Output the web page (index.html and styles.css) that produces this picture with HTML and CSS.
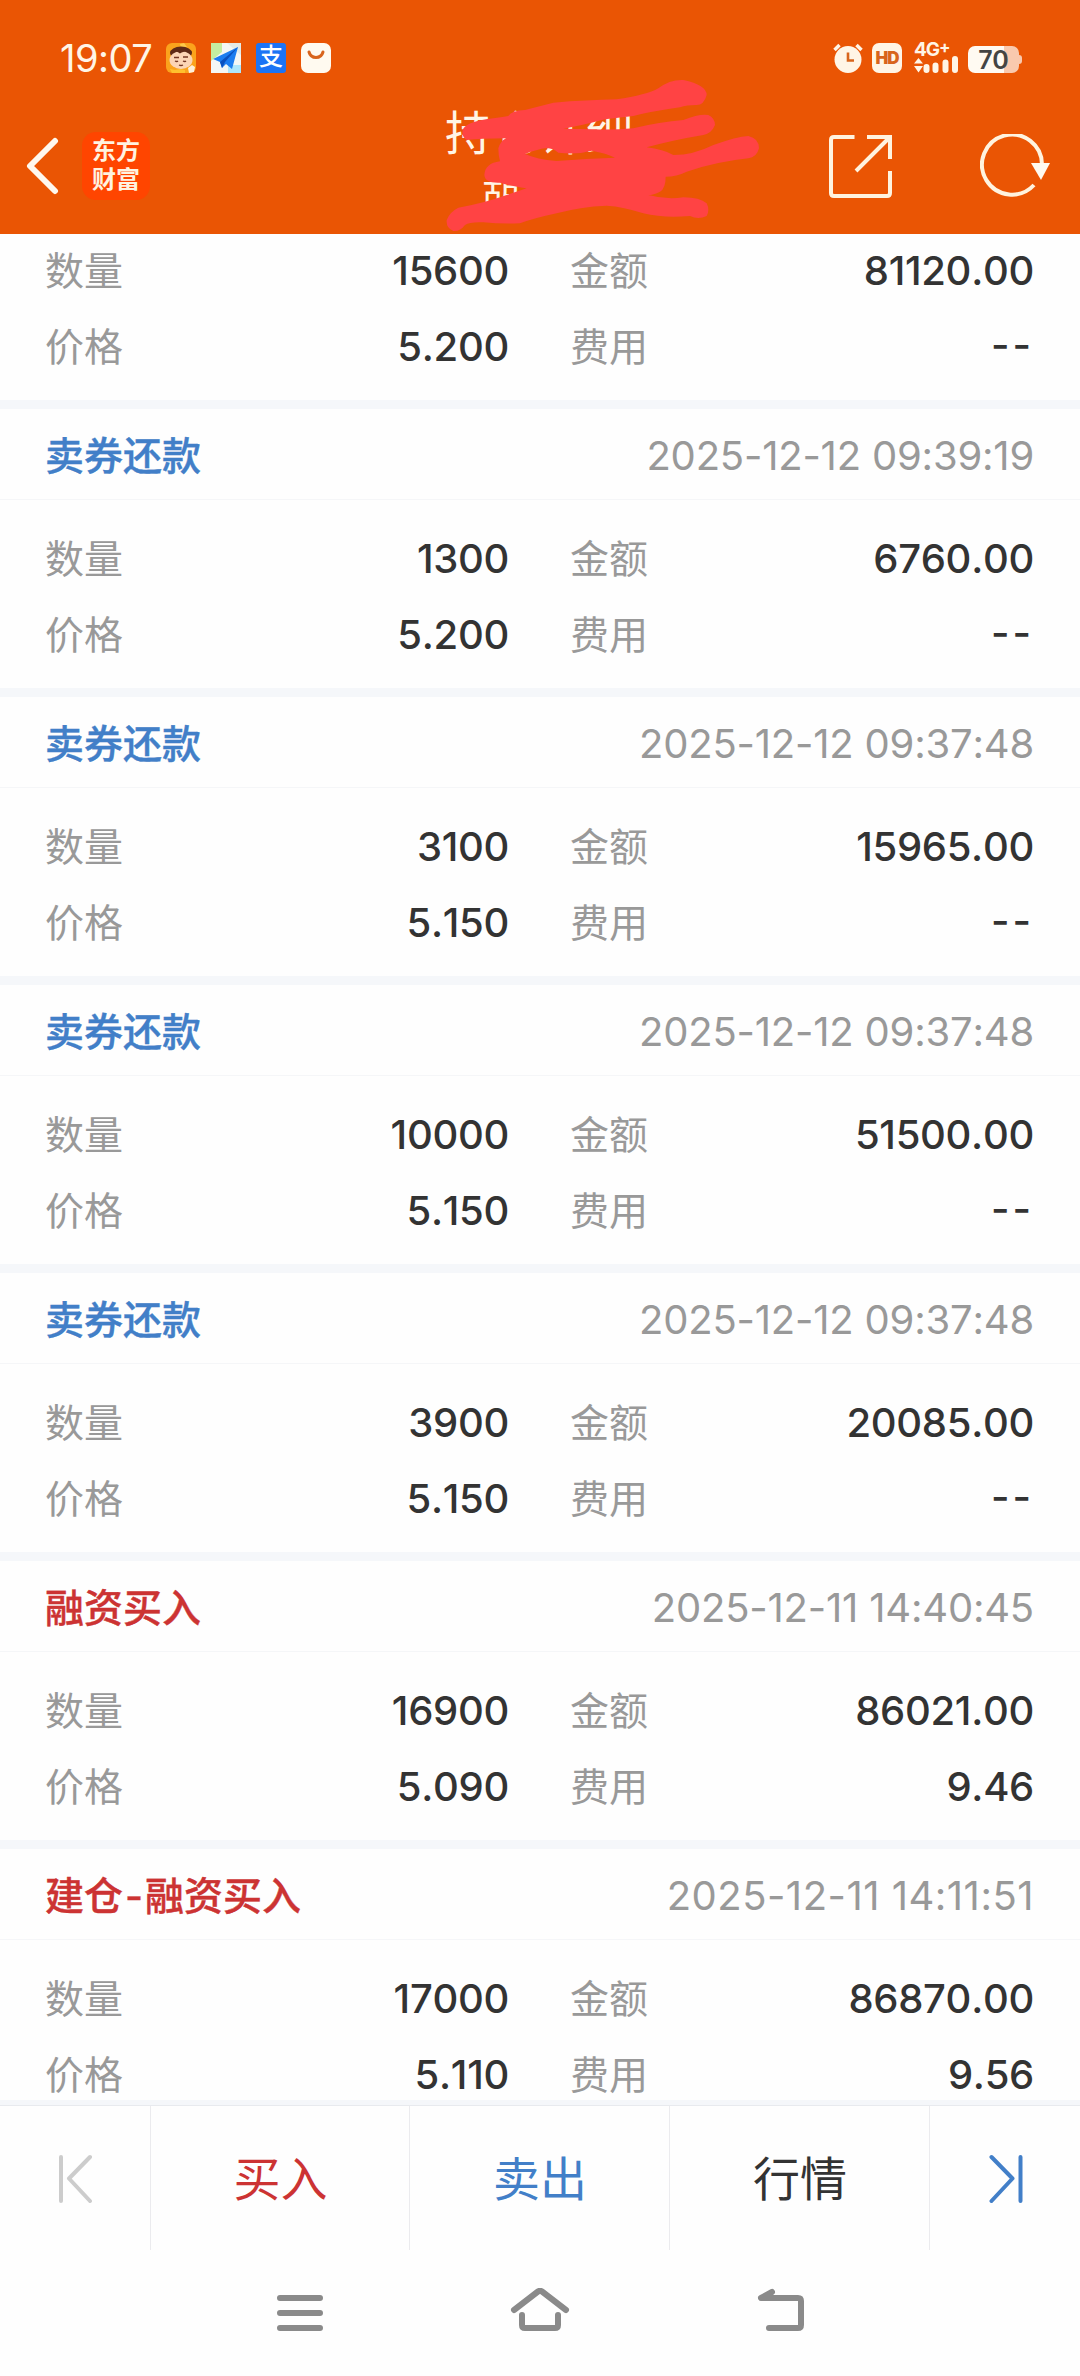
FILE: index.html
```html
<!DOCTYPE html>
<html lang="zh-CN">
<head>
    <meta charset="utf-8">
    <title>持仓详细</title>
    <meta name="viewport" content="width=device-width, initial-scale=1">
    <link rel="stylesheet" href="styles.css">
</head>
<body>
    <div class="header">
        <div class="status-bar">
            <span class="time">19:07</span>
            <div class="status-apps">
                <svg width="30" height="30" viewBox="0 0 30 30">
                    <rect width="30" height="30" rx="6" fill="#fba31c"/>
                    <path d="M14 1l4-1 3 4-6 1z" fill="#ffc94a"/>
                    <ellipse cx="15" cy="10" rx="11" ry="6.500" fill="#5f2a16"/>
                    <ellipse cx="15" cy="17" rx="11.500" ry="9" fill="#fcd5b5"/>
                    <path d="M6 9q4-3 8 0l2-1q5-2 9 2" stroke="#5f2a16" stroke-width="2.500" fill="none"/>
                    <path d="M8 14.500h5M17 14h5M9 18q2 1 3 0M17 18q2 1 3 0M13 22q2 1 4 0" stroke="#743722" stroke-width="1.300" fill="none"/>
                    <path d="M4 26l5 1 5-1 5 1v3H6z" fill="#ffc02e"/>
                    <path d="M22 25l4-3 3 2-1 5-5 1z" fill="#fff0dc"/>
                </svg>
                <svg width="30" height="30" viewBox="0 0 30 30">
                    <rect width="30" height="30" fill="#f4f7f5"/>
                    <path d="M0 0h11v9L0 18z" fill="#c5eda0"/>
                    <path d="M16 0h14v12z" fill="#e4ebe8"/>
                    <path d="M17 22h13v8H17z" fill="#aee6fb"/>
                    <path d="M27 4L2 16l7 3 2 6 4-4 6 5z" fill="#1c7df0"/>
                    <path d="M27 4L9 19l2 6 3-6z" fill="#0b50bd"/>
                </svg>
                <span class="alipay">支</span>
                <svg width="30" height="30" viewBox="0 0 30 30">
                    <rect width="30" height="30" rx="7" fill="#fffaf0"/>
                    <path d="M8 9q1.500 5.500 7 5.500T22 9" stroke="#d8641c" stroke-width="3" stroke-linecap="round" fill="none"/>
                </svg>
            </div>
            <div class="status-right">
                <svg width="30" height="30" viewBox="0 0 30 30">
                    <path d="M1.500 7l5-5M23.500 2l5 5" stroke="#fff5e6" stroke-width="3.500"/>
                    <circle cx="15" cy="16.500" r="13.500" fill="#fff5e6"/>
                    <path d="M15 9.500v8h6" stroke="#d8641c" stroke-width="2.600" fill="none"/>
                </svg>
                <span class="hd">HD</span>
                <div class="signal">
                    <span class="network">4G<sup>+</sup></span>
                    <svg width="45" height="17" viewBox="0 0 45 17">
                        <path d="M4.500 2l4.500 5.500H0zM4.500 16.500L0 10h9z" fill="#fff5e6"/>
                        <path d="M12.500 11v3M21.500 9.500v4.500M31.500 6.500v7.500M41 3v11" stroke="#fff5e6" stroke-width="6" stroke-linecap="round"/>
                    </svg>
                </div>
                <div class="battery"><span>70</span></div>
            </div>
        </div>
        <div class="nav-bar">
            <svg class="back" width="34" height="58" viewBox="0 0 34 58">
                <path d="M30 4L5 29l25 25" stroke="#fff8ee" stroke-width="6" stroke-linecap="round" stroke-linejoin="round" fill="none"/>
            </svg>
            <div class="logo">东方<br>财富</div>
            <div class="title">
                <div class="title-main">持仓详细</div>
                <div class="title-sub">胡</div>
            </div>
            <svg class="share" width="63" height="63" viewBox="0 0 63 63">
                <path d="M25.500 2H5Q2 2 2 5v53q0 3 3 3h53q3 0 3-3V36M38 2h23v22M61 2L27 36" stroke="#fff3df" stroke-width="4" fill="none"/>
            </svg>
            <svg class="refresh" width="72" height="64" viewBox="0 0 72 64">
                <path d="M62 31A30 30 0 1 0 54 51" stroke="#fff3df" stroke-width="4" fill="none"/>
                <path d="M51 29h19L61 46z" fill="#fffaf0"/>
            </svg>
        </div>
        <!-- marker strokes over the title -->
        <svg class="scribble" width="380" height="180" viewBox="0 0 1140 540">
            <path fill="#ff4344" fill-rule="evenodd" d="M188 210Q195 188 262 177Q300 172 325 168Q335 152 375 150L460 128Q560 120 650 118Q740 105 775 85Q810 58 850 60Q920 75 920 105Q912 135 890 135Q860 135 840 142Q750 155 700 168L615 178Q540 198 490 206L580 208Q640 210 700 205Q780 185 850 180Q900 160 925 165Q945 175 945 195Q935 220 910 225Q820 240 740 262Q790 268 820 285Q880 285 940 255Q1010 230 1045 228Q1077 235 1077 265Q1070 293 1045 295Q950 305 860 335Q830 350 797 350Q797 385 780 395Q760 405 745 405Q800 420 850 412Q900 412 920 430Q930 450 920 468Q895 480 870 468Q790 475 730 460Q670 440 620 437Q540 440 470 460Q400 475 360 490Q300 492 250 487Q210 485 195 495Q180 515 160 513Q138 505 140 480Q150 455 175 443Q250 430 320 405L380 385Q350 382 300 368Q255 370 253 345Q255 310 300 304Q295 285 295 265Q300 245 318 235Q240 235 200 240Q185 230 188 210ZM375 282Q410 268 440 264Q460 265 475 278Q530 285 575 272Q620 280 645 293Q560 296 470 303Q410 298 375 282Z"/>
        </svg>
    </div>

    <div class="records">
        <div class="record">
            <div class="record-body first">
                <span class="label">数量</span><span class="value">15600</span>
                <span class="label">金额</span><span class="value">81120.00</span>
                <span class="label">价格</span><span class="value">5.200</span>
                <span class="label">费用</span><span class="value none">--</span>
            </div>
        </div>
        <div class="record">
            <div class="record-head"><span class="type sell">卖券还款</span><span class="date">2025-12-12 09:39:19</span></div>
            <div class="record-body">
                <span class="label">数量</span><span class="value">1300</span>
                <span class="label">金额</span><span class="value">6760.00</span>
                <span class="label">价格</span><span class="value">5.200</span>
                <span class="label">费用</span><span class="value none">--</span>
            </div>
        </div>
        <div class="record">
            <div class="record-head"><span class="type sell">卖券还款</span><span class="date">2025-12-12 09:37:48</span></div>
            <div class="record-body">
                <span class="label">数量</span><span class="value">3100</span>
                <span class="label">金额</span><span class="value">15965.00</span>
                <span class="label">价格</span><span class="value">5.150</span>
                <span class="label">费用</span><span class="value none">--</span>
            </div>
        </div>
        <div class="record">
            <div class="record-head"><span class="type sell">卖券还款</span><span class="date">2025-12-12 09:37:48</span></div>
            <div class="record-body">
                <span class="label">数量</span><span class="value">10000</span>
                <span class="label">金额</span><span class="value">51500.00</span>
                <span class="label">价格</span><span class="value">5.150</span>
                <span class="label">费用</span><span class="value none">--</span>
            </div>
        </div>
        <div class="record">
            <div class="record-head"><span class="type sell">卖券还款</span><span class="date">2025-12-12 09:37:48</span></div>
            <div class="record-body">
                <span class="label">数量</span><span class="value">3900</span>
                <span class="label">金额</span><span class="value">20085.00</span>
                <span class="label">价格</span><span class="value">5.150</span>
                <span class="label">费用</span><span class="value none">--</span>
            </div>
        </div>
        <div class="record">
            <div class="record-head"><span class="type buy">融资买入</span><span class="date">2025-12-11 14:40:45</span></div>
            <div class="record-body">
                <span class="label">数量</span><span class="value">16900</span>
                <span class="label">金额</span><span class="value">86021.00</span>
                <span class="label">价格</span><span class="value">5.090</span>
                <span class="label">费用</span><span class="value">9.46</span>
            </div>
        </div>
        <div class="record">
            <div class="record-head"><span class="type buy">建仓<span class="dash">-</span>融资买入</span><span class="date wide">2025-12-11 14:11:51</span></div>
            <div class="record-body">
                <span class="label">数量</span><span class="value">17000</span>
                <span class="label">金额</span><span class="value">86870.00</span>
                <span class="label">价格</span><span class="value">5.110</span>
                <span class="label">费用</span><span class="value">9.56</span>
            </div>
        </div>
    </div>

    <div class="toolbar">
        <div class="tool">
            <svg width="36" height="50" viewBox="0 0 36 50">
                <path d="M3 4v44M32 4L11 25.500 32 48" stroke="#ccc" stroke-width="4" stroke-linecap="round" stroke-linejoin="round" fill="none"/>
            </svg>
        </div>
        <div class="tool buy"><span>买入</span></div>
        <div class="tool sell"><span>卖出</span></div>
        <div class="tool"><span>行情</span></div>
        <div class="tool">
            <svg width="36" height="50" viewBox="0 0 36 50">
                <path d="M33.500 4v44M4.500 4l21 21.500L4.500 48" stroke="#427fc8" stroke-width="4" stroke-linecap="round" stroke-linejoin="round" fill="none"/>
            </svg>
        </div>
    </div>

    <div class="system-nav">
        <svg width="60" height="50" viewBox="0 0 60 50">
            <path d="M10 10h40M10 25h40M10 40h40"/>
        </svg>
        <svg width="60" height="50" viewBox="0 0 60 50">
            <path d="M4 22L28 3.500q2-1.500 4 0L56 22M12 27v10q0 3 3 3h30q3 0 3-3V27"/>
        </svg>
        <svg width="60" height="50" viewBox="0 0 60 50">
            <path d="M22 4L11 10h37q3 0 3 3v24q0 3-3 3H19"/>
        </svg>
    </div>
</body>
</html>
```

FILE: styles.css
```css
* {
    box-sizing: border-box;
}
body {
    margin: 0;
    height: 2376px;
    display: flex;
    flex-direction: column;
    overflow: hidden;
    background: #fefefe;
    color: #333;
    font-family: Inter, "Noto Sans CJK SC", sans-serif;
}
svg {
    display: block;
    flex: none;
}

/* header */
.header {
    position: relative;
    z-index: 1;
    flex: none;
    height: 234px;
    background: #ea5504;
    color: #fff5e6;
}
.status-bar {
    display: flex;
    align-items: center;
    height: 116px;
    padding: 0 58px 0 60px;
}
.time {
    width: 106px;
    font-size: 38px;
    letter-spacing: -0.5px;
}
.status-apps {
    display: flex;
    gap: 15px;
}
.alipay {
    width: 30px;
    height: 30px;
    border-radius: 3px;
    background: #1c74f5;
    color: #fff;
    font-size: 24px;
    font-weight: 500;
    line-height: 28px;
    text-align: center;
}
.status-right {
    display: flex;
    align-items: center;
    margin-left: auto;
}
.hd {
    width: 30px;
    height: 30px;
    margin: 0 12px 0 9px;
    border-radius: 7px;
    background: #fff5e6;
    color: #d8641c;
    font-size: 17px;
    font-weight: 900;
    line-height: 30px;
    letter-spacing: -1px;
    text-align: center;
}
.signal {
    width: 45px;
    height: 30px;
    margin-right: 9px;
}
.network {
    display: block;
    height: 13px;
    font-size: 19px;
    font-weight: 700;
    line-height: 13px;
    letter-spacing: -1px;
    white-space: nowrap;
}
.network sup {
    font-size: 17px;
    line-height: 0;
    vertical-align: 3px;
}
.battery {
    position: relative;
    width: 51px;
    height: 27px;
    margin: 3px 3px 0 0;
    border-radius: 7px;
    background: linear-gradient(to right, #fffaf2 70%, #f9c9ae 70%);
    color: #444;
    font-size: 25px;
    font-weight: 600;
    line-height: 28px;
    text-align: center;
}
.battery::after {
    content: "";
    position: absolute;
    right: -3px;
    top: 9px;
    width: 3px;
    height: 9px;
    border-radius: 0 3px 3px 0;
    background: #f9c9ae;
}
.nav-bar {
    display: flex;
    align-items: center;
    height: 100px;
    padding: 0 28px 0 25px;
}
.back {
    margin-right: 23px;
}
.logo {
    width: 68px;
    height: 68px;
    padding-top: 4px;
    border-radius: 14px;
    background: #ff4500;
    color: #fff3e0;
    font-size: 24px;
    font-weight: 700;
    line-height: 29px;
    text-align: center;
}
.title {
    flex: 1;
    padding-left: 295px;
}
.title-main {
    margin-top: -13px;
    font-size: 47px;
    line-height: 60px;
}
.title-sub {
    margin-top: 4px;
    padding-left: 37px;
    font-size: 38px;
    line-height: 50px;
}
.share {
    margin-right: 88px;
}
.scribble {
    position: absolute;
    left: 400px;
    top: 60px;
}

/* records */
.records {
    flex: 1;
    min-height: 0;
    overflow: hidden;
}
.record {
    border-bottom: 9px solid #f5f7fa;
}
.record-head {
    display: flex;
    align-items: center;
    justify-content: space-between;
    height: 91px;
    padding: 0 46px 0 45px;
    border-bottom: 1px solid #f5f6f8;
}
.type {
    padding-bottom: 3px;
    font-size: 39px;
    font-weight: 500;
    -webkit-text-stroke: 0.4px currentColor;
}
.dash {
    margin: 0 2px;
}
.date {
    padding-top: 2px;
    color: #999;
    font-size: 40px;
    font-kerning: none;
    letter-spacing: -0.2px;
}
.date.wide {
    letter-spacing: 0.5px;
}
.record-body {
    display: grid;
    grid-template-columns: 80px 384px 80px 384px;
    column-gap: 0;
    grid-auto-rows: 76px;
    align-items: center;
    height: 188px;
    padding: 20px 46px 0 45px;
}
.record-body.first {
    height: 168px;
    padding-top: 0;
    margin-top: -2px;
}
.record-body .label:nth-child(4n+3) {
    margin-left: 61px;
}
.record-body .value:nth-child(4n) {
    margin-right: -61px;
}
.label {
    padding-bottom: 5px;
    color: #999;
    font-size: 39px;
    white-space: nowrap;
}
.value {
    font-size: 40px;
    font-weight: 500;
    font-kerning: none;
    letter-spacing: -0.3px;
    text-align: right;
}
.value.none {
    padding-bottom: 3px;
    letter-spacing: 3px;
}
.sell {
    color: #427fc8;
}
.buy {
    color: #cc3333;
}

/* bottom bar */
.toolbar {
    flex: none;
    display: grid;
    grid-template-columns: 151px 259px 260px 260px 150px;
    height: 150px;
    border-top: 5px solid #f5f7fa;
}
.tool {
    display: flex;
    align-items: center;
    justify-content: center;
    border-top: 1px solid #e8eaee;
    font-size: 47px;
}
.tool span {
    padding-bottom: 5px;
}
.tool + .tool {
    position: relative;
}
.tool + .tool::before {
    content: "";
    position: absolute;
    left: -1px;
    top: 0;
    bottom: 0;
    width: 1px;
    background: #ebebee;
}
.system-nav {
    flex: none;
    display: flex;
    justify-content: center;
    gap: 180px;
    height: 126px;
    padding-top: 38px;
}
.system-nav path {
    fill: none;
    stroke: #8a8a8a;
    stroke-width: 6;
    stroke-linecap: round;
    stroke-linejoin: round;
}
```
